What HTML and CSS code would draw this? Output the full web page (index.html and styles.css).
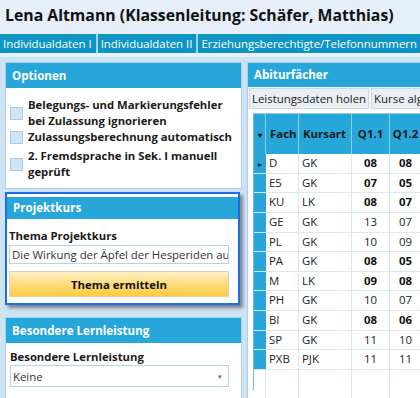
FILE: index.html
```html
<!DOCTYPE html>
<html lang="de">
<head>
  <meta charset="UTF-8">
  <meta name="viewport" content="width=device-width, initial-scale=1.0">
  <title>Lena Altmann</title>
  <link rel="stylesheet" href="styles.css">
</head>
<body>

  <h1 class="student-title">Lena Altmann (Klassenleitung: Schäfer, Matthias)</h1>

  <!-- Tab bar -->
  <div class="tabs">
    <div class="tab">Individualdaten I</div>
    <div class="tab">Individualdaten II</div>
    <div class="tab">Erziehungsberechtigte/Telefonnummern</div>
  </div>

  <div class="content">

    <!-- Left column -->
    <div class="left-col">

      <section class="panel">
        <h2 class="panel-head">Optionen</h2>
        <div class="panel-body options">
          <label class="check">
            <span class="check-box"></span>
            <span>Belegungs- und Markierungsfehler<br>bei Zulassung ignorieren</span>
          </label>
          <label class="check">
            <span class="check-box"></span>
            <span>Zulassungsberechnung automatisch</span>
          </label>
          <label class="check check-last">
            <span class="check-box"></span>
            <span>2. Fremdsprache in Sek. I manuell<br>geprüft</span>
          </label>
        </div>
      </section>

      <section class="panel panel-focused">
        <h2 class="panel-head">Projektkurs</h2>
        <div class="panel-body">
          <div class="field-label">Thema Projektkurs</div>
          <div class="text-input">Die Wirkung der Äpfel der Hesperiden auf die Götter</div>
          <button class="yellow-btn">Thema ermitteln</button>
        </div>
      </section>

      <section class="panel panel-open">
        <h2 class="panel-head">Besondere Lernleistung</h2>
        <div class="panel-body">
          <div class="field-label">Besondere Lernleistung</div>
          <div class="select-input">
            <span>Keine</span>
            <span class="select-arrow">&#9662;</span>
          </div>
        </div>
      </section>

    </div>

    <!-- Right column -->
    <section class="panel right-panel">
      <h2 class="panel-head">Abiturfächer</h2>
      <div class="toolbar">
        <button class="tool-btn">Leistungsdaten holen</button>
        <button class="tool-btn">Kurse algorithmisch setzen</button>
      </div>
      <div class="grid-wrap">
        <div class="grid" id="abiGrid">
          <div class="gh gh-corner"><span class="sort-arrow">&#9662;</span></div>
          <div class="gh">Fach</div>
          <div class="gh">Kursart</div>
          <div class="gh gh-num">Q1.1</div>
          <div class="gh gh-num">Q1.2</div>
          <div class="gh"></div>
        </div>
      </div>
    </section>

  </div>

  <script>
    // Fach, Kursart, Q1.1, Q1.2 (bold = counted)
    var rows = [
      ['D', 'GK', '08', true, '08', true],
      ['E5', 'GK', '07', true, '05', true],
      ['KU', 'LK', '08', true, '07', true],
      ['GE', 'GK', '13', false, '07', false],
      ['PL', 'GK', '10', false, '09', false],
      ['PA', 'GK', '08', true, '05', true],
      ['M', 'LK', '09', true, '08', true],
      ['PH', 'GK', '10', false, '07', false],
      ['BI', 'GK', '08', true, '06', true],
      ['SP', 'GK', '11', false, '10', false],
      ['PXB', 'PJK', '11', false, '11', false]
    ];

    var grid = document.getElementById('abiGrid');
    rows.forEach(function (r, i) {
      grid.innerHTML += `
        <div class="rh">${i === 0 ? '<span class="row-arrow">&#9656;</span>' : ''}</div>
        <div class="cell">${r[0]}</div>
        <div class="cell">${r[1]}</div>
        <div class="cell num ${r[3] ? 'strong' : ''}">${r[2]}</div>
        <div class="cell num ${r[5] ? 'strong' : ''}">${r[4]}</div>
        <div class="cell"></div>
      `;
    });
    // empty space below the last row keeps the column lines
    grid.innerHTML += '<div class="rest"></div><div class="rest"></div><div class="rest"></div><div class="rest"></div><div class="rest"></div><div class="rest"></div>';
  </script>
</body>
</html>
```

FILE: styles.css
```css
/* Global */
body {
  font-family: "Open Sans", "Noto Sans", sans-serif;
  font-size: 11.4px;
  color: #1a1a1a;
  background-color: #e6eef9;
  margin: 0;
  height: 398px;
  overflow: hidden;
}

/* Title */
.student-title {
  margin: 0;
  height: 34px;
  box-sizing: border-box;
  padding: 3px 0 0 5px;
  font-size: 15.8px;
  line-height: 24px;
  font-weight: bold;
  color: #111;
  white-space: nowrap;
}

/* Tabs */
.tabs {
  display: flex;
  height: 19px;
  background-color: #0f95c4;
  white-space: nowrap;
  overflow: hidden;
}

.tab {
  color: #fff;
  line-height: 19px;
  padding: 0 4px 0 3px;
  border-right: 2px solid #9fd6ec;
}

.tab:last-child {
  border-right: none;
}

/* Main area */
.content {
  display: flex;
  gap: 5px;
  border-top: 4px solid #eaf3fc;
  background-color: #cde2f3;
  padding: 5px 0 0 5px;
  height: 340px;
  overflow: hidden;
}

.left-col {
  width: 237px;
  flex-shrink: 0;
  display: flex;
  flex-direction: column;
}

/* Panels */
.panel {
  background-color: #fff;
  border: 1px solid #a9d1ec;
}

.panel-head {
  margin: 0;
  height: 25px;
  line-height: 25px;
  padding-left: 6px;
  background-color: #26a6d9;
  color: #fff;
  font-size: 11.6px;
  font-weight: bold;
}

.panel-body {
  padding: 9px 12px 8px 4px;
}

/* Options checkboxes */
.options {
  padding: 9px 4px 8px 4px;
  height: 83px;
}

.check {
  display: flex;
  align-items: center;
  gap: 5px;
  font-weight: bold;
  font-size: 11.3px;
  line-height: 16px;
  white-space: nowrap;
}

.check-last {
  margin-top: 3px;
}

.check-box {
  width: 11px;
  height: 11px;
  flex-shrink: 0;
  background-color: #cfe4f5;
  border: 1px solid #a5cde9;
}

/* Projektkurs (focused) */
.panel-focused {
  margin-top: 3px;
  border: 2px solid #1c6de6;
  padding-top: 3px;
  box-shadow: 3px 3px 3px rgba(60, 60, 60, 0.55);
  width: 231px;
}

.panel-focused .panel-head {
  height: 22px;
  line-height: 22px;
}

.panel-focused .panel-body {
  padding: 9px 9px 6px 2px;
}

.field-label {
  font-weight: bold;
  font-size: 11.3px;
  line-height: 16px;
}

.text-input {
  margin-top: 1px;
  height: 17px;
  line-height: 17px;
  border: 1px solid #b2d3ec;
  padding: 0 2px;
  color: #333;
  white-space: nowrap;
  overflow: hidden;
}

.yellow-btn {
  display: block;
  width: 100%;
  margin-top: 7px;
  height: 26px;
  font-family: inherit;
  font-size: 11.4px;
  font-weight: bold;
  color: #111;
  border: 1px solid #d9d2b8;
  background: linear-gradient(#fdf2c8 0%, #ffe08a 40%, #ffcb3d 100%);
}

/* Besondere Lernleistung */
.panel-open {
  margin-top: 12px;
  flex: 1;
}

.panel-open .panel-body {
  padding-top: 6px;
}

.select-input {
  display: flex;
  justify-content: space-between;
  align-items: center;
  height: 20px;
  border: 1px solid #b2d3ec;
  padding: 0 6px 0 2px;
  color: #333;
}

.select-arrow {
  font-size: 7px;
  color: #666;
}

/* Right panel */
.right-panel {
  flex: 1;
  border-right: none;
  overflow: hidden;
}

.right-panel .panel-head {
  height: 24px;
  line-height: 24px;
}

.toolbar {
  display: flex;
  gap: 2px;
  padding: 1px 0 0 1px;
  background-color: #f4f7fa;
  white-space: nowrap;
}

.tool-btn {
  font-family: inherit;
  font-size: 11.4px;
  color: #222;
  height: 21px;
  padding: 0 2px;
  background-color: #e9eef3;
  border: 1px solid #cdd8e2;
}

.grid-wrap {
  padding: 4px 0 0 5px;
}

/* Abiturfächer grid */
.grid {
  display: grid;
  grid-template-columns: 12px 33px 53px 38px 32px 40px;
  grid-template-rows: 40px;
  grid-auto-rows: 19.65px;
  border-left: 1px solid #7db5d6;
  border-top: 1px solid #9fcbe6;
}

.gh {
  box-sizing: border-box;
  background-color: #26a6d9;
  border-right: 1px solid #8fd0ec;
  font-weight: bold;
  line-height: 40px;
  padding-left: 4px;
  white-space: nowrap;
}

.gh-corner {
  padding: 0;
  text-align: center;
}

.gh-num {
  text-align: center;
  padding-left: 0;
}

.sort-arrow {
  font-size: 8px;
  color: #111;
}

.rh {
  background-color: #26a6d9;
  border-bottom: 1px solid #d4ecf8;
  box-sizing: border-box;
  text-align: center;
  line-height: 18px;
}

.row-arrow {
  font-size: 8px;
  color: #222;
}

.cell {
  box-sizing: border-box;
  border-right: 1px solid #dbe8f3;
  border-bottom: 1px solid #dbe8f3;
  padding-left: 3px;
  line-height: 18px;
  color: #222;
  white-space: nowrap;
}

.num {
  text-align: center;
  padding-left: 0;
}

.strong {
  font-weight: bold;
  color: #111;
}

.rest {
  height: 60px;
  border-right: 1px solid #dbe8f3;
}
```
